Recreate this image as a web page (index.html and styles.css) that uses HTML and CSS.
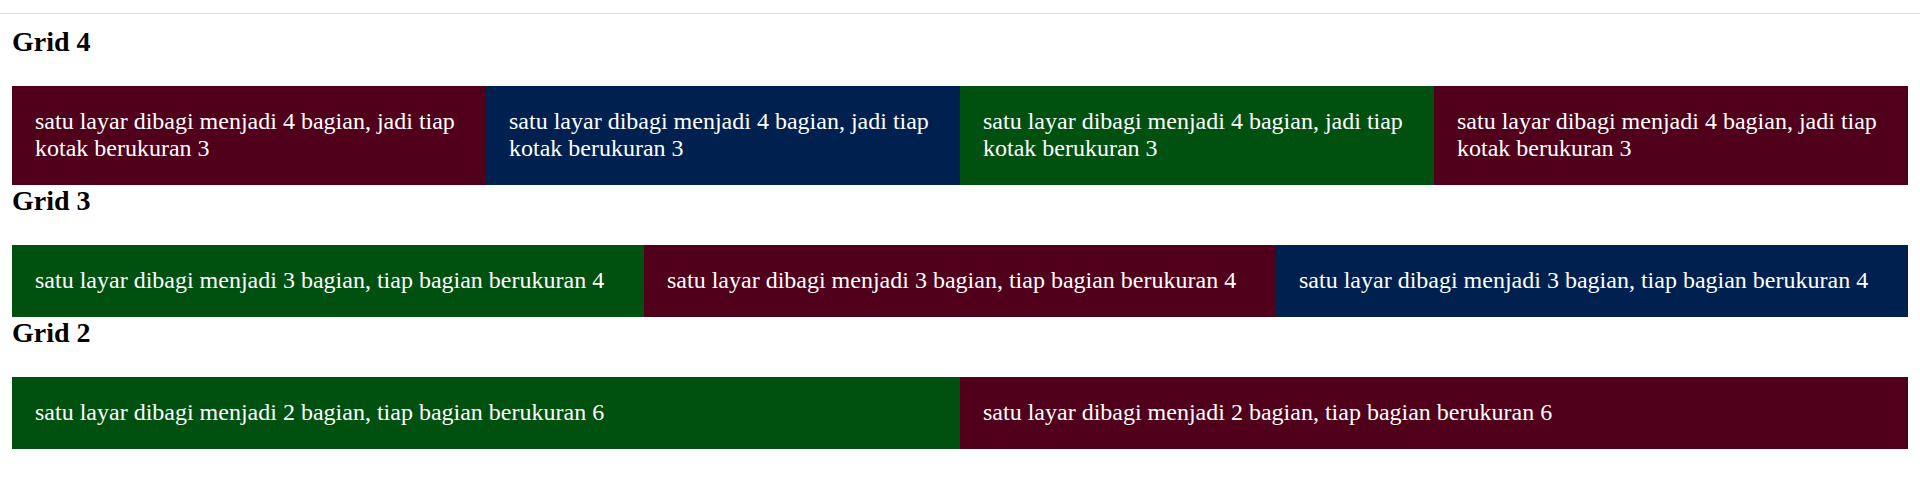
FILE: index.html
```html
<!DOCTYPE html>
<html lang="id">
<head>
<meta charset="utf-8">
<title>Grid</title>
<link rel="stylesheet" href="styles.css">
</head>
<body>
<div class="topbar"></div>
<main class="page">
  <h3 class="title first">Grid 4</h3>
  <div class="row cols-4">
    <div class="cell maroon">satu layar dibagi menjadi 4 bagian, jadi tiap kotak berukuran 3</div>
    <div class="cell navy">satu layar dibagi menjadi 4 bagian, jadi tiap kotak berukuran 3</div>
    <div class="cell green">satu layar dibagi menjadi 4 bagian, jadi tiap kotak berukuran 3</div>
    <div class="cell maroon">satu layar dibagi menjadi 4 bagian, jadi tiap kotak berukuran 3</div>
  </div>
  <h3 class="title">Grid 3</h3>
  <div class="row cols-3">
    <div class="cell green">satu layar dibagi menjadi 3 bagian, tiap bagian berukuran 4</div>
    <div class="cell maroon">satu layar dibagi menjadi 3 bagian, tiap bagian berukuran 4</div>
    <div class="cell navy">satu layar dibagi menjadi 3 bagian, tiap bagian berukuran 4</div>
  </div>
  <h3 class="title">Grid 2</h3>
  <div class="row cols-2">
    <div class="cell green">satu layar dibagi menjadi 2 bagian, tiap bagian berukuran 6</div>
    <div class="cell maroon">satu layar dibagi menjadi 2 bagian, tiap bagian berukuran 6</div>
  </div>
</main>
</body>
</html>
```

FILE: styles.css
```css
html, body {
  margin: 0;
  padding: 0;
  background: #ffffff;
}

body {
  font-family: "Liberation Serif", "Times New Roman", serif;
  color: #000000;
}

.topbar {
  height: 13px;
  border-bottom: 1px solid #dddddd;
}

.page {
  padding: 0 12px;
}

.title {
  font-size: 28px;
  font-weight: bold;
  line-height: 31px;
  margin: 0 0 29px 0;
}

.title.first {
  margin-top: 12px;
}

.row {
  display: grid;
}

.cols-4 {
  grid-template-columns: repeat(4, 1fr);
}

.cols-3 {
  grid-template-columns: repeat(3, 1fr);
}

.cols-2 {
  grid-template-columns: repeat(2, 1fr);
}

.cell {
  padding: 22px 23px 23px 23px;
  font-size: 24px;
  line-height: 27px;
  color: #ffffff;
}

.maroon {
  background: #50001a;
}

.navy {
  background: #002050;
}

.green {
  background: #00500f;
}
```
